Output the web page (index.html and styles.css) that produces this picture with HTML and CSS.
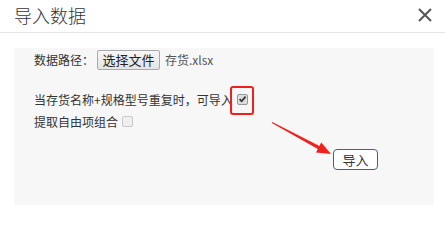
FILE: index.html
```html
<!DOCTYPE html>
<html lang="zh">
<head>
<meta charset="utf-8">
<link rel="stylesheet" href="styles.css">
</head>
<body>
<div class="modal">
  <div class="modal-header">
    <span class="modal-title">导入数据</span>
    <span class="close">
      <svg width="14" height="14" viewBox="0 0 14 14"><path d="M1 1L13 13M13 1L1 13" stroke="#555" stroke-width="2" fill="none"/></svg>
    </span>
  </div>
  <div class="panel">
    <div class="row-file">
      <span class="label">数据路径：</span>
      <span class="file-btn">选择文件</span>
      <span class="file-name">存货.xlsx</span>
    </div>
    <div class="row-check first">
      <span>当存货名称+规格型号重复时，可导入</span>
      <span class="cb checked">
        <svg width="10" height="10" viewBox="0 0 10 10"><path d="M1.8 5.2L4 7.5L8.4 2.4" stroke="#333" stroke-width="2" fill="none"/></svg>
      </span>
    </div>
    <div class="row-check">
      <span>提取自由项组合</span>
      <span class="cb"></span>
    </div>
    <div class="row-action">
      <span class="import-btn">导入</span>
    </div>
  </div>
  <div class="highlight"></div>
  <svg class="arrow" width="445" height="205" viewBox="0 0 445 205">
    <polygon points="272.2,122.1 319.4,145.9 321.2,142.6 331,154 316,152.4 317.8,149.1 271.8,122.9" fill="#f0201c"/>
  </svg>
</div>
</body>
</html>
```
FILE: styles.css
```css
html, body {
  margin: 0;
  padding: 0;
  background: #fff;
}
body {
  font-family: "Noto Sans CJK SC", "Liberation Sans", sans-serif;
  color: #333;
  font-size: 12px;
}
.modal {
  position: relative;
  width: 445px;
  height: 205px;
  overflow: hidden;
}
.modal-header {
  height: 33px;
  border-bottom: 1px solid #e5e5e5;
  display: flex;
  align-items: center;
  justify-content: space-between;
  padding: 0 13px 0 14px;
  box-sizing: border-box;
}
.modal-title {
  font-size: 18px;
  font-weight: 300;
  line-height: 30px;
  color: #333;
  margin-top: -2px;
}
.close {
  display: flex;
  margin-top: -2px;
}
.panel {
  margin: 15px 0 0 14px;
  width: 420px;
  height: 157px;
  background: #f7f7f7;
  padding: 1px 0 0 20px;
  box-sizing: border-box;
}
.row-file {
  display: flex;
  align-items: center;
  height: 21px;
}
.label {
  margin-right: 3px;
}
.file-btn {
  display: inline-flex;
  align-items: center;
  justify-content: center;
  width: 63px;
  height: 20px;
  box-sizing: border-box;
  border: 1px solid #a9a9a9;
  border-radius: 2px;
  background: linear-gradient(#f6f6f6, #e3e3e3);
  font-size: 13px;
  color: #222;
}
.file-name {
  margin-left: 5px;
  font-size: 12px;
  color: #555;
}
.row-check {
  display: flex;
  align-items: center;
  height: 22px;
}
.row-check.first {
  margin-top: 18px;
}
.cb {
  width: 11px;
  height: 11px;
  box-sizing: border-box;
  border: 1px solid #c8c8c8;
  border-radius: 2px;
  background: #efefef;
  margin-left: 4px;
  display: flex;
  align-items: center;
  justify-content: center;
}
.cb.checked {
  border-color: #999;
  background: #ddd;
}
.row-action {
  display: flex;
  justify-content: flex-end;
  padding-right: 56px;
  margin-top: 17px;
}
.import-btn {
  display: inline-flex;
  align-items: center;
  justify-content: center;
  width: 45px;
  height: 21px;
  box-sizing: border-box;
  border: 1px solid #2e6e80;
  border-radius: 4px;
  background: #fff;
  font-size: 13px;
  color: #333;
}
.highlight {
  position: absolute;
  left: 230px;
  top: 86px;
  width: 24px;
  height: 29px;
  box-sizing: border-box;
  border: 2.5px solid #f0201c;
  border-radius: 3px;
}
.arrow {
  position: absolute;
  left: 0;
  top: 0;
}
```
